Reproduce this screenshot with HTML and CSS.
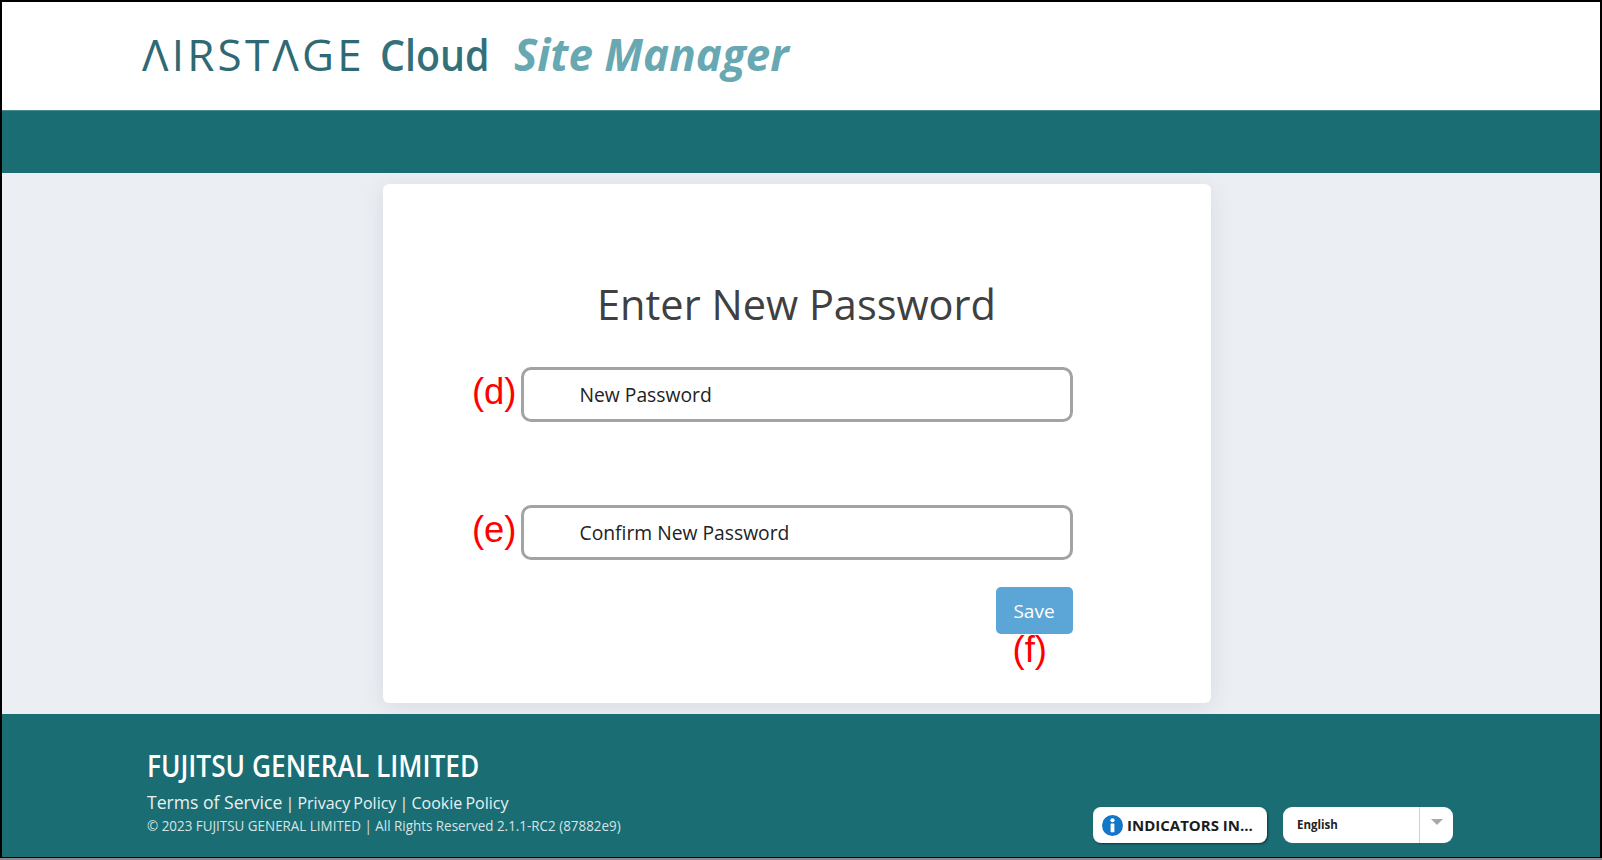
FILE: index.html
```html
<!DOCTYPE html>
<html lang="en">
<head>
<meta charset="utf-8">
<title>AIRSTAGE Cloud Site Manager</title>
<link rel="stylesheet" href="styles.css">
</head>
<body>
<div class="frame">
  <header class="header">
    <div class="logo">
      <span class="logo-air">ΛIRSTΛGE</span>
      <span class="logo-cloud">Cloud</span>
      <span class="logo-site">Site Manager</span>
    </div>
  </header>
  <div class="band"></div>
  <main class="main">
    <section class="card">
      <h1 class="title">Enter New Password</h1>
      <div class="field field-first">
        <span class="mark mark-side">(d)</span>
        <div class="input">New Password</div>
      </div>
      <div class="field field-second">
        <span class="mark mark-side">(e)</span>
        <div class="input">Confirm New Password</div>
      </div>
      <div class="actions">
        <button class="save">Save</button>
        <span class="mark mark-below">(f)</span>
      </div>
    </section>
  </main>
  <footer class="footer">
    <div class="legal">
      <div class="company">FUJITSU GENERAL LIMITED</div>
      <div class="links"><span class="link-terms">Terms of Service</span> | Privacy Policy | Cookie Policy</div>
      <div class="copy">© 2023 FUJITSU GENERAL LIMITED | All Rights Reserved 2.1.1-RC2 (87882e9)</div>
    </div>
    <div class="tools">
      <button class="indicators">
        <svg class="info" viewBox="0 0 20 20" width="21" height="21"><circle cx="10" cy="10" r="10" fill="#1276c9"/><circle cx="10" cy="5" r="2" fill="#fff"/><rect x="8.2" y="8" width="3.6" height="8.5" rx="0.6" fill="#fff"/></svg>
        <span>INDICATORS IN...</span>
      </button>
      <div class="lang">
        <span class="lang-value">English</span>
        <span class="lang-arrow"><span class="caret"></span></span>
      </div>
    </div>
  </footer>
</div>
</body>
</html>
```

FILE: styles.css
```css
* { box-sizing: border-box; }
html, body { margin: 0; padding: 0; }
html { background: #8a8a8a; }
body { font-family: "Open Sans", sans-serif; }
.frame {
  width: 1602px;
  height: 858px;
  border: solid #000;
  border-width: 2px 2px 1px 2px;
  background: #fff;
  display: flex;
  flex-direction: column;
  overflow: hidden;
}
.header {
  height: 108px;
  flex: none;
  background: #fff;
  display: flex;
  align-items: center;
  padding: 0 0 5px 140px;
}
.logo { display: flex; align-items: baseline; white-space: nowrap; }
.logo-air {
  font-weight: 400;
  font-size: 44px;
  color: #2f6a74;
  letter-spacing: 3.2px;
  width: 238px;
  display: inline-block;
}
.logo-cloud {
  font-weight: 600;
  font-size: 44px;
  color: #34707a;
  width: 134px;
  display: inline-block;
  transform: scaleX(0.895);
  transform-origin: left center;
}
.logo-site {
  font-weight: 700;
  font-style: italic;
  font-size: 44px;
  color: #68a8b3;
}
.band { height: 63px; flex: none; background: #1a6d73; border-top: 1px solid #4b8c91; }
.main {
  height: 541px;
  flex: none;
  background: #ebeef3;
  padding-top: 11px;
  display: flex;
  justify-content: center;
}
.card {
  width: 828px;
  height: 519px;
  margin-left: -9px;
  background: #fff;
  border-radius: 6px;
  box-shadow: 0 4px 24px rgba(60, 70, 90, 0.10);
  padding: 92px 138px 0 138px;
}
.title {
  margin: 0;
  font-weight: 400;
  font-size: 41.5px;
  line-height: 56px;
  color: #404040;
  text-align: center;
}
.field { position: relative; }
.field-first { margin-top: 35px; }
.field-second { margin-top: 83px; }
.input {
  height: 55px;
  border: 3px solid #a3a3a3;
  border-radius: 10px;
  background: #fff;
  padding-left: 56px;
  font-size: 19.3px;
  line-height: 49px;
  color: #222;
}
.mark {
  position: absolute;
  font-family: "Liberation Sans", Arial, sans-serif;
  color: #f00;
  font-size: 36.5px;
  line-height: 44px;
}
.mark-side { right: 100%; margin-right: 4px; top: 3px; }
.mark-below { top: 41px; left: 17px; }
.actions { position: relative; width: 77px; margin: 27px 0 0 auto; }
.save {
  display: block;
  width: 77px;
  height: 47px;
  padding: 0;
  border: 0;
  border-radius: 5px;
  background: #5ba6d6;
  color: #fff;
  font-family: inherit;
  font-size: 19px;
}
.footer {
  flex: 1;
  background: #1a6d73;
  color: #fff;
  display: flex;
  justify-content: space-between;
  padding: 30px 147px 0 145px;
}
.company {
  font-size: 30px;
  line-height: 44px;
  font-weight: 600;
  white-space: nowrap;
  transform: scaleX(0.875);
  transform-origin: left center;
}
.links { font-size: 16px; line-height: 25px; margin-top: 2px; color: #e8f1f2; word-spacing: -1px; }
.link-terms { font-size: 17.6px; word-spacing: 0; }
.copy {
  font-size: 15px;
  line-height: 22px;
  margin-top: -2px;
  color: #d5e4e6;
  white-space: nowrap;
  transform: scaleX(0.894);
  transform-origin: left center;
}
.tools { display: flex; gap: 16px; padding-top: 63px; align-items: flex-start; }
.indicators {
  width: 174px;
  height: 36px;
  display: flex;
  align-items: center;
  gap: 4px;
  padding: 0 0 0 9px;
  border: 0;
  border-radius: 8px;
  background: #fff;
  box-shadow: 1px 1px 2px rgba(0,0,0,0.5);
  font-family: inherit;
  font-size: 15px;
  font-weight: 700;
  color: #1c1c1c;
}
.info { flex: none; }
.lang {
  width: 170px;
  height: 36px;
  display: flex;
  background: #fff;
  border-radius: 9px;
  font-size: 11.5px;
  font-weight: 700;
  color: #222;
}
.lang-value { flex: 1; padding-left: 14px; line-height: 36px; }
.lang-arrow { width: 34px; border-left: 1px solid #d0d0d0; display: flex; justify-content: center; padding-top: 12px; }
.caret { width: 0; height: 0; border: solid transparent; border-width: 6px 6px 0; border-top-color: #a9a9a9; }
```
